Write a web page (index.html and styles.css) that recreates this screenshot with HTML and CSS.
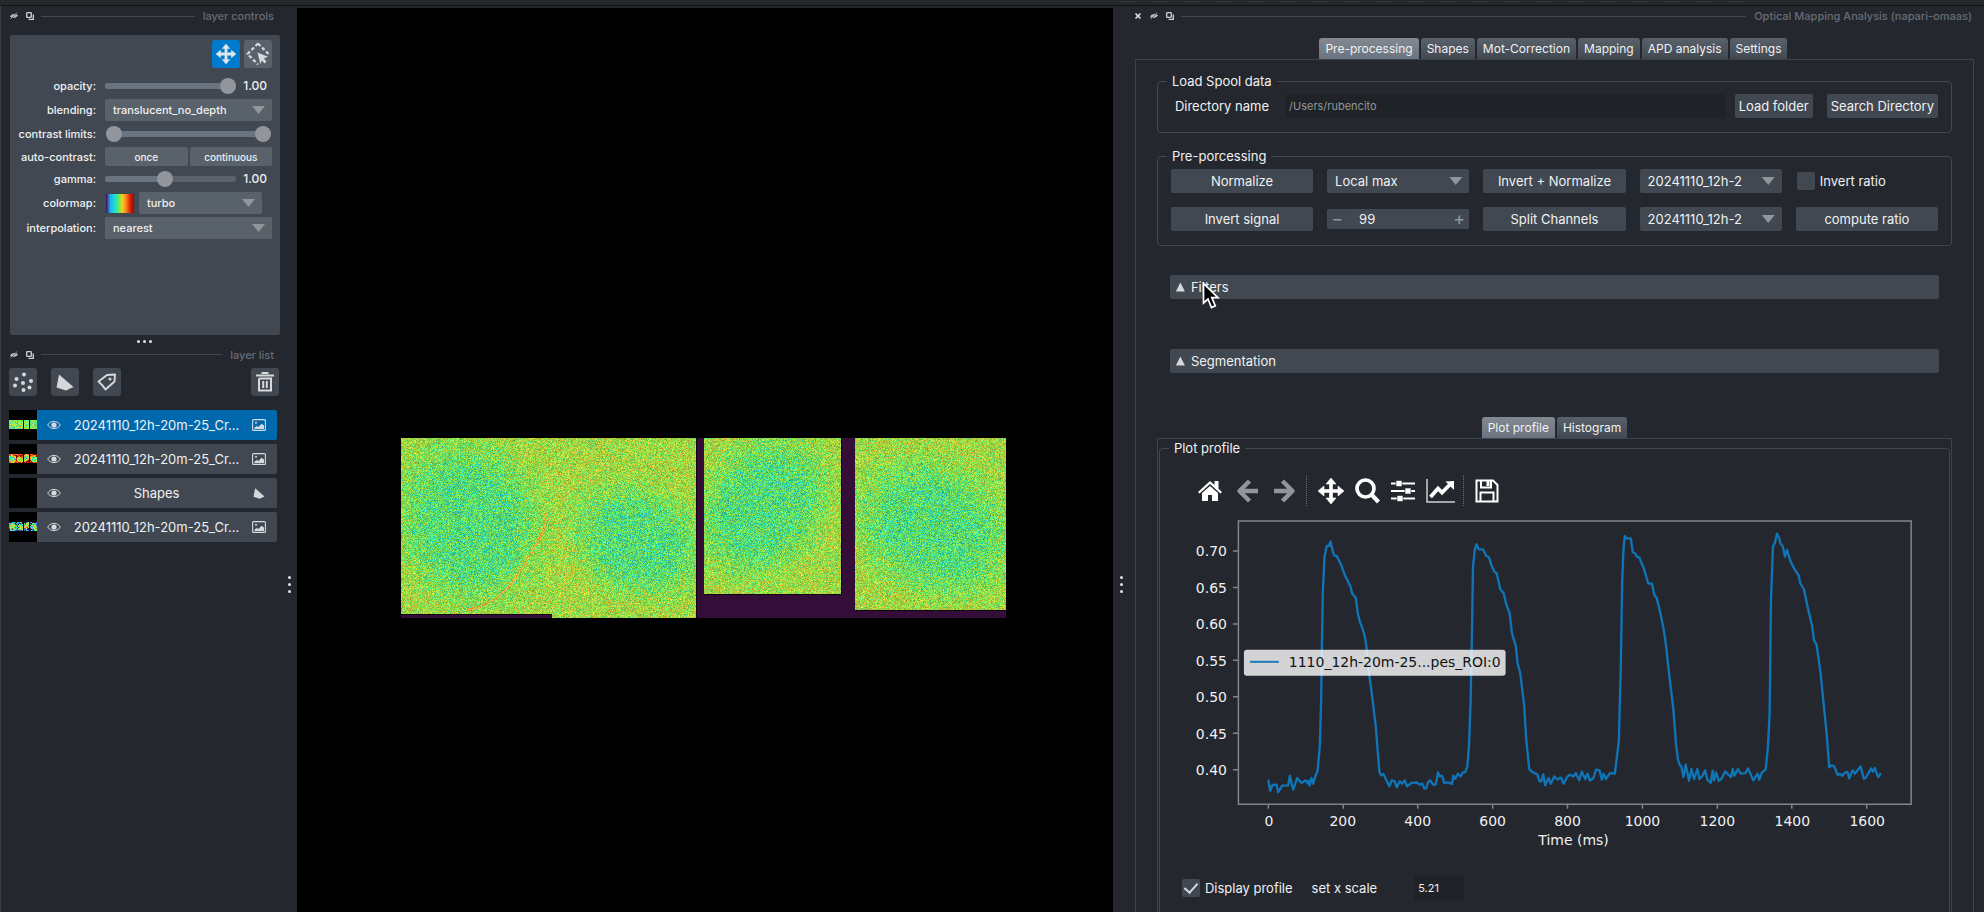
FILE: index.html
```
<!DOCTYPE html>
<html lang="en">
<head>
<meta charset="utf-8">
<title>napari</title>
<link rel="stylesheet" href="styles.css">
</head>
<body>
<svg class="defs" aria-hidden="true">
  <symbol id="i-hide" viewBox="0 0 10 10"><path d="M1 5.5C3 2.5 7 2.500 9 4.500C7 7.500 3 7.500 1 5.500Z" fill="#b9bcc1"/><path d="M1.500 8.500L8.500 1.500" stroke="#24272e" stroke-width="1"/><path d="M1.500 7.800L7.800 1.800" stroke="#d0d2d5" stroke-width=".8"/></symbol>
  <symbol id="i-float" viewBox="0 0 10 10"><rect x="1.700" y="1.700" width="4.600" height="4.600" rx=".6" fill="none" stroke="#d0d2d5" stroke-width="1.300"/><path d="M8.300 3.500V8.300H3.500" fill="none" stroke="#d0d2d5" stroke-width="1.300"/></symbol>
  <symbol id="i-close" viewBox="0 0 10 10"><path d="M2.500 2.500L7.500 7.500M7.500 2.500L2.500 7.500" stroke="#e6e7e9" stroke-width="1.500"/></symbol>
  <symbol id="i-move" viewBox="0 0 26 26"><path d="M13 4V22M4 13H22" stroke="currentColor" stroke-width="3.600"/><path d="M13 0L18 6H8ZM13 26L8 20H18ZM0 13L6 8V18ZM26 13L20 18V8Z" fill="currentColor" stroke="currentColor" stroke-width=".6" stroke-linejoin="round"/></symbol>
  <symbol id="i-eye" viewBox="0 0 14 10"><path d="M.7 5C3.500 .2 10.500 .2 13.300 5C10.500 9.800 3.500 9.800 .7 5Z" fill="none" stroke="#d8d9dc" stroke-width="1"/><circle cx="7" cy="5" r="2.600" fill="#d8d9dc"/></symbol>
  <symbol id="i-image" viewBox="0 0 14 12"><rect x=".6" y=".6" width="12.800" height="10.800" rx="1" fill="none" stroke="#d8d9dc" stroke-width="1.100"/><circle cx="4" cy="3.800" r="1" fill="#d8d9dc"/><path d="M2.500 10V8.500L5 7L6.500 8L9.500 4.800L12 6.500V10Z" fill="#d8d9dc"/></symbol>
  <symbol id="i-shape" viewBox="0 0 18 17"><path d="M3 .5L17.500 13L10 16.500L.5 13.500Z" fill="#d4d6d9"/></symbol>
</svg>
<header class="strip"><span></span></header>
<div class="app">
  <aside class="left">
    <div class="docks">
      <div class="dock-title">
        <svg class="i10"><use href="#i-hide"/></svg><svg class="i10"><use href="#i-float"/></svg><hr><span>layer controls</span>
      </div>
      <section class="controls">
        <div class="modes">
          <button class="sq active" aria-label="Pan and zoom"><svg width="20" height="20"><use href="#i-move"/></svg></button>
          <button class="sq light" aria-label="Transform"><svg width="24" height="24" viewBox="0 0 24 24"><path d="M12 1.500L22.500 12M12 1.500L1.500 12L12 22.500" fill="none" stroke="#d8d9dc" stroke-width="2.200" stroke-dasharray="3.500 2.200"/><path d="M11.500 10.500L22 14.800L17.800 16.500L20.500 19.500L18.500 21.500L16 18.500L14.300 22Z" fill="#d8d9dc"/></svg></button>
        </div>
        <div class="form">
          <label for="opacity">opacity:</label>
          <div class="slide"><input id="opacity" type="range" min="0" max="1" step="0.01" value="1" style="--fill:100%"><output>1.00</output></div>
          <label for="blending">blending:</label>
          <div class="pick"><select id="blending"><option>translucent_no_depth</option></select></div>
          <label for="clim">contrast limits:</label>
          <div class="double"><input id="clim" type="range" value="0"><input type="range" value="100" aria-label="upper contrast limit"></div>
          <span class="lab">auto-contrast:</span>
          <div class="pair"><button>once</button><button>continuous</button></div>
          <label for="gamma">gamma:</label>
          <div class="slide"><input id="gamma" type="range" min="0" max="100" value="45" style="--fill:45%"><output>1.00</output></div>
          <label for="cmap">colormap:</label>
          <div class="cmap"><i class="turbo"></i><div class="pick"><select id="cmap"><option>turbo</option></select></div></div>
          <label for="interp">interpolation:</label>
          <div class="pick"><select id="interp"><option>nearest</option></select></div>
        </div>
      </section>
      <div class="hdots"><i></i><i></i><i></i></div>
      <div class="dock-title">
        <svg class="i10"><use href="#i-hide"/></svg><svg class="i10"><use href="#i-float"/></svg><hr><span>layer list</span>
      </div>
      <div class="layer-tools">
        <button class="sq" aria-label="New points layer"><svg width="20" height="20" viewBox="0 0 20 20" fill="#d8d9dc"><circle cx="11" cy="2.500" r="2"/><circle cx="3.500" cy="7" r="2"/><circle cx="18" cy="9" r="2"/><circle cx="10" cy="11" r="2"/><circle cx="2" cy="13.500" r="2"/><circle cx="16.500" cy="15.500" r="2"/><circle cx="10.500" cy="18" r="2"/></svg></button>
        <button class="sq" aria-label="New shapes layer"><svg width="18" height="17"><use href="#i-shape"/></svg></button>
        <button class="sq" aria-label="New labels layer"><svg width="20" height="18" viewBox="0 0 20 18"><path d="M1.500 8.500L10 2L18 1.500L17.500 8.500L8.500 16.500Q5.500 12 1.500 8.500Z" fill="none" stroke="#d8d9dc" stroke-width="1.900" stroke-linejoin="round"/><circle cx="13" cy="6" r="1.500" fill="#d8d9dc"/></svg></button>
        <button class="sq trash" aria-label="Delete layer"><svg width="18" height="20" viewBox="0 0 18 20" fill="none" stroke="#d8d9dc" stroke-width="2"><path d="M0 3.500H18M5.500 1H12.500M3 6.500V18.500H15V6.500H3M7.200 9V16M10.800 9V16"/></svg></button>
      </div>
      <ul class="layers">
        <li class="sel"><canvas width="28" height="30" data-kind="0"></canvas><svg width="14" height="10"><use href="#i-eye"/></svg><span>20241110_12h-20m-25_Cr...</span><svg width="14" height="12"><use href="#i-image"/></svg></li>
        <li><canvas width="28" height="30" data-kind="1"></canvas><svg width="14" height="10"><use href="#i-eye"/></svg><span>20241110_12h-20m-25_Cr...</span><svg width="14" height="12"><use href="#i-image"/></svg></li>
        <li><canvas width="28" height="30" data-kind="3"></canvas><svg width="14" height="10"><use href="#i-eye"/></svg><span>Shapes</span><svg width="14" height="11"><use href="#i-shape"/></svg></li>
        <li><canvas width="28" height="30" data-kind="2"></canvas><svg width="14" height="10"><use href="#i-eye"/></svg><span>20241110_12h-20m-25_Cr...</span><svg width="14" height="12"><use href="#i-image"/></svg></li>
      </ul>
    </div>
    <div class="vdots"><i></i><i></i><i></i></div>
  </aside>
  <main class="viewer"><canvas id="view" width="605" height="180"></canvas></main>
  <div class="vdots split"><i></i><i></i><i></i></div>
  <aside class="right">
    <div class="dock-title">
      <svg class="i10"><use href="#i-close"/></svg><svg class="i10"><use href="#i-hide"/></svg><svg class="i10"><use href="#i-float"/></svg><hr><span>Optical Mapping Analysis (napari-omaas)</span>
    </div>
    <nav class="tabs top"><button class="on">Pre-processing</button><button>Shapes</button><button>Mot-Correction</button><button>Mapping</button><button>APD analysis</button><button>Settings</button></nav>
    <div class="pane">
      <fieldset class="load">
        <legend>Load Spool data</legend>
        <div class="row"><label for="dir">Directory name</label><input id="dir" type="text" value="/Users/rubencito"><button>Load folder</button><button class="search">Search Directory</button></div>
      </fieldset>
      <fieldset class="prep">
        <legend>Pre-porcessing</legend>
        <div class="grid">
          <button>Normalize</button>
          <div class="pick"><select aria-label="Normalization"><option>Local max</option></select></div>
          <button>Invert + Normalize</button>
          <div class="pick"><select aria-label="Image 1"><option>20241110_12h-20m-25_Cr</option></select></div>
          <label class="check"><input type="checkbox">Invert ratio</label>
          <button>Invert signal</button>
          <div class="spin"><button aria-label="Decrease">−</button><input type="text" value="99" aria-label="Percentile"><button aria-label="Increase">+</button></div>
          <button>Split Channels</button>
          <div class="pick"><select aria-label="Image 2"><option>20241110_12h-20m-25_Cr</option></select></div>
          <button>compute ratio</button>
        </div>
      </fieldset>
      <button class="fold filters"><i></i>Filters<svg class="cursor" width="18" height="27" viewBox="0 0 18 27"><path d="M1.500 1.500V21L6 17L9.500 25.500L13.300 23.800L9.800 15.700H16Z" fill="#000" stroke="#fff" stroke-width="1.700"/></svg></button>
      <button class="fold"><i></i>Segmentation</button>
      <nav class="tabs"><button class="on">Plot profile</button><button>Histogram</button></nav>
      <div class="subpane">
        <fieldset class="plot">
          <legend>Plot profile</legend>
          <div class="toolbar">
            <button aria-label="Home"><svg width="24" height="22" viewBox="0 0 24 22" fill="#fff"><path d="M12 1L0 12L1.600 13.500L12 4L22.400 13.500L24 12L20.500 8.800V1H16.500V5Z"/><path d="M12 6L4 13V21H10V15H14V21H20V13Z"/></svg></button>
            <button aria-label="Back"><svg width="23" height="24" viewBox="0 0 23 24" fill="none" stroke="#92959a" stroke-width="4.500"><path d="M13.500 2L3.500 12L13.500 22M4 12H22" stroke-linejoin="round"/></svg></button>
            <button aria-label="Forward"><svg width="23" height="24" viewBox="0 0 23 24" fill="none" stroke="#92959a" stroke-width="4.500"><path d="M9.500 2L19.500 12L9.500 22M19 12H1" stroke-linejoin="round"/></svg></button>
            <i class="sep"></i>
            <button aria-label="Pan"><svg width="26" height="26"><use href="#i-move"/></svg></button>
            <button aria-label="Zoom"><svg width="25" height="26" viewBox="0 0 25 26" fill="none" stroke="#fff"><circle cx="10.500" cy="10.500" r="8.500" stroke-width="3.700"/><path d="M16.500 16.500L23.500 24" stroke-width="4.200"/></svg></button>
            <button aria-label="Subplots"><svg width="24" height="22" viewBox="0 0 24 22" fill="#fff"><path d="M0 2.500H24V4.500H0ZM0 10H24V12H0ZM0 17.500H24V19.500H0Z"/><path d="M5 .5H11V6.500H5ZM14 8H20V14H14ZM6 15.500H12V21.500H6Z" stroke="#24272e" stroke-width=".6"/></svg></button>
            <button aria-label="Edit axes"><svg width="29" height="24" viewBox="0 0 29 24"><path d="M1 0V23H29" fill="none" stroke="#cfd1d4" stroke-width="1.500"/><path d="M4.500 18L12 9.500L16 13.500L24 5.500" fill="none" stroke="#fff" stroke-width="3.800"/><path d="M28 2V11L19.500 2.500Z" fill="#fff"/></svg></button>
            <i class="sep"></i>
            <button aria-label="Save"><svg width="24" height="24" viewBox="0 0 24 24" fill="none" stroke="#fff" stroke-width="2"><path d="M1.500 1.500H18L22.500 6V22.500H1.500ZM5.500 22V13.500H18.500V22"/><path d="M6 2V8.500H16V2"/><path d="M11.500 2H14.500V7H11.500Z" fill="#fff" stroke="none"/></svg></button>
          </div>
          <svg class="chart" viewBox="1160 516 790 346">
            <g class="axes"><path d="M1238.500 521H1912V804.500H1238.500Z"/>
            <path d="M1233 551H1238M1233 587.500H1238M1233 624H1238M1233 660.500H1238M1233 697H1238M1233 733.500H1238M1233 770H1238M1268.500 805V809M1343.500 805V809M1418 805V809M1493 805V809M1568 805V809M1643 805V809M1718 805V809M1792.500 805V809M1867.500 805V809"/></g>
            <g class="line">
            <polyline transform="translate(1120 500) scale(.33333)" points="445,840 451,873 458,856 470,855 475,877 487,858 505,857 510,828 520,870 532,835 545,850 558,842 563,850 567,843 569,858 575,835 580,852 588,825 593,815 600,740 604,600 606,450 609,280 614,170 621,138 627,138 632,125 640,158 645,168 651,168 664,195 675,225 692,260 697,280 708,294 714,340 721,368 728,385 735,410 740,440 745,500 756,580 768,680 779,817 785,827 791,823 800,842 809,860 816,842 825,845 831,863 840,845 847,852 855,842 862,860 875,850 890,848 900,855 908,852 914,867 920,865 925,847 932,842 940,855 948,855 955,818 960,830 967,828 974,850 985,848 997,853 1001,828 1006,838 1015,822 1023,830 1030,818 1037,817 1043,800 1048,740 1053,600 1057,400 1060,200 1066,145 1071,133 1077,148 1090,148 1100,168 1108,172 1115,195 1124,215 1131,220 1142,268 1152,280 1160,313 1170,340 1177,400 1189,440 1194,490 1202,520 1214,620 1220,720 1229,808 1240,818 1253,824 1260,845 1265,845 1271,824 1277,857 1287,835 1294,852 1304,830 1314,840 1324,832"/>
            <polyline transform="translate(1544 500) scale(.33333)" points="52,832 60,852 70,833 78,825 90,830 97,820 107,842 115,816 125,838 132,822 139,843 150,835 157,810 168,812 175,840 180,822 187,838 200,820 214,822 226,725 232,500 236,250 240,150 244,108 250,115 262,115 268,157 275,160 280,170 287,172 301,205 314,250 326,252 332,283 340,295 352,345 362,395 368,440 378,530 390,630 398,735 404,782 410,798 414,800 420,832 427,795 437,843 444,808 452,838 462,808 468,838 476,830 485,812 492,840 502,850 508,813 512,842 518,818 526,843 534,838 546,815 555,825 563,832 568,808 573,828 584,808 592,822 607,820 614,806 630,842 643,822 648,840 656,818 667,810 674,740 679,640 683,300 689,140 695,128 701,101 708,115 712,132 718,138 725,170 731,150 742,185 755,210 766,226 771,250 782,268 795,330 807,380 812,420 820,435 832,520 840,600 850,700 858,803 865,797 873,800 883,825 890,823 897,828 906,818 913,817 918,836 928,812 935,822 952,800 962,837 967,835 984,806 989,816 995,805 1005,832 1013,820"/>
            </g>
            <g class="ylab"><text x="1227" y="556">0.70</text><text x="1227" y="593">0.65</text><text x="1227" y="629">0.60</text><text x="1227" y="666">0.55</text><text x="1227" y="702">0.50</text><text x="1227" y="739">0.45</text><text x="1227" y="775">0.40</text></g>
            <g class="xlab"><text x="1269" y="826">0</text><text x="1343" y="826">200</text><text x="1418" y="826">400</text><text x="1493" y="826">600</text><text x="1568" y="826">800</text><text x="1643" y="826">1000</text><text x="1718" y="826">1200</text><text x="1793" y="826">1400</text><text x="1868" y="826">1600</text><text x="1574" y="845">Time (ms)</text></g>
            <rect x="1244" y="650" width="262" height="26" rx="3" fill="#fff" fill-opacity=".8"/>
            <path d="M1250 662H1279" stroke="#1c7bb4" stroke-width="2"/>
            <text class="key" x="1289" y="667">1110_12h-20m-25...pes_ROI:0</text>
          </svg>
          <div class="foot"><label class="check"><input type="checkbox" checked>Display profile</label><label for="xs">set x scale</label><input id="xs" type="text" value="5.21"></div>
        </fieldset>
      </div>
    </div>
  </aside>
</div>
<script src="app.js"></script>
</body>
</html>
```
FILE: styles.css
```
* { box-sizing: border-box; }
body { margin: 0; height: 100vh; overflow: hidden; display: flex; flex-direction: column; background: #24272e; color: #f0f1f2; font: 13px/16px Inter, "Liberation Sans", sans-serif; }
button, input, select { font: inherit; color: inherit; border: 0; border-radius: 2px; margin: 0; padding: 0; outline: 0; background: #414851; }
input[type="text"] { background: #1f2226; min-width: 0; }
svg { display: block; flex: none; }
hr { flex: 1; border: 0; height: 1px; margin: 0; background: #414851; }
.defs { position: absolute; width: 0; height: 0; }
.strip { flex: none; height: 6px; background: #26292c; border-bottom: 1px solid #101217; padding-left: 1120px; }
.strip span { display: block; width: 624px; height: 3px; background: repeating-linear-gradient(90deg, #33363b 0 16px, transparent 16px 32px) 0 1px / 100% 1px no-repeat; }
.app { flex: 1; min-height: 0; display: flex; }

.left { flex: none; width: 297px; display: flex; border-left: 1px solid #3c4046; }
.docks { flex: 1; padding: 0 1px 0 8px; }
.dock-title { display: flex; align-items: center; gap: 6px; height: 20px; color: #666d76; font-size: 11px; font-weight: 500; }
.dock-title hr { margin: 0 2px 0 0; }
.i10 { width: 10px; height: 10px; }
.docks .dock-title { padding-right: 6px; }
.controls { height: 300px; margin: 9px 0 0 1px; background: #414851; border-radius: 2px; padding: 5px 8px; }
.modes { display: flex; justify-content: flex-end; gap: 4px; margin-bottom: 8px; }
.sq { width: 28px; height: 28px; display: grid; place-items: center; color: #e0e6ec; border-radius: 3px; }
.sq.active { background: #007acc; }
.sq.light { background: #59616a; }
.form { display: grid; grid-template-columns: 78px 1fr; column-gap: 9px; grid-template-rows: 20px 22px 20px 19px 20px 22px 22px; row-gap: 3px; align-items: center; font-size: 11px; font-weight: 500; }
.form > label, .lab { justify-self: end; white-space: nowrap; }
.form .pick select, .pair button { background: #59616a; }
.form .pick select { height: 22px; }
.slide { display: grid; grid-template-columns: 1fr 36px; column-gap: 0; align-items: center; }
.slide output { text-align: right; padding-right: 5px; font-size: 12px; }
input[type="range"] { appearance: none; width: 100%; height: 16px; background: transparent; }
input[type="range"]::-webkit-slider-runnable-track { height: 6px; border-radius: 2px; background: linear-gradient(90deg, #6a7380 var(--fill, 100%), #59616a var(--fill, 100%)); }
input[type="range"]::-webkit-slider-thumb { appearance: none; width: 16px; height: 16px; margin-top: -5px; border-radius: 50%; background: #92959b; }
.double { display: grid; padding: 0 1px; }
.double input { grid-area: 1 / 1; }
.double input + input::-webkit-slider-runnable-track { background: none; }
.pair { display: grid; grid-template-columns: 1fr 1fr; gap: 2px; }
.pair button { height: 19px; font-size: 10px; }
.cmap { display: grid; grid-template-columns: 29px 1fr; gap: 5px; padding-right: 10px; align-items: center; }
.turbo { height: 19px; margin-left: 1px; background: linear-gradient(90deg, #30123b, #4454c4 8%, #18b8e0 16%, #20d8e0 30%, #50f060 44%, #f0d020 58%, #ff9020 70%, #e02000 86%, #900c00); }
.pick { display: grid; align-items: center; min-width: 0; }
.pick select { grid-area: 1 / 1; appearance: none; width: 100%; min-width: 0; height: 24px; padding: 0 36px 0 8px; }
.grid .pick select { padding-right: 40px; }
.pick::after { content: ""; grid-area: 1 / 1; justify-self: end; margin-right: 7px; width: 13px; height: 8px; background: #92959a; clip-path: polygon(0 0, 100% 0, 50% 100%); pointer-events: none; }
.hdots { height: 12px; display: flex; justify-content: center; align-items: center; gap: 3px; }
.hdots i, .vdots i { width: 3px; height: 3px; border-radius: 50%; background: #e2e3e5; }
.vdots { width: 16px; display: flex; flex-direction: column; align-items: center; gap: 4px; padding-top: 570px; }
.hdots + .dock-title { height: 15px; }
.layer-tools { display: flex; gap: 14px; margin: 6px 0 14px; padding-right: 1px; }
.trash { margin-left: auto; }
.layers { list-style: none; margin: 0; padding: 0 3px 0 0; display: grid; gap: 4px; }
.layers li { height: 30px; display: flex; align-items: center; gap: 10px; background: #414851; border-radius: 2px; padding-right: 11px; }
.layers li.sel { background: #0069ad; }
.layers span { flex: 1; text-align: center; white-space: nowrap; }

.viewer { flex: 1; margin-top: 2px; background: #000; padding: 430px 0 0 104px; min-width: 0; overflow: hidden; }
.viewer canvas { display: block; }
.split { flex: none; width: 18px; }

.right { flex: none; width: 43%; padding: 0 10px 0 2px; display: flex; flex-direction: column; min-height: 0; }
.right .dock-title { padding-right: 2px; }
.tabs { display: flex; justify-content: center; gap: 2px; }
.tabs.top { margin-top: 12px; }
.tabs button { height: 21px; padding: 0 6px; border-radius: 3px 3px 0 0; font-size: 12px; background: linear-gradient(#59616a, #414851); }
.tabs .on { background: linear-gradient(#838990, #6a7380); }
.pane { flex: 1; min-height: 0; overflow: hidden; border: 1px solid #3d434b; border-bottom: 0; padding: 11px 21px 0; margin-left: 2px; }
fieldset { margin: 0; min-width: 0; border: 1px solid #414851; border-radius: 4px; padding: 0 13px; }
legend { height: 20px; line-height: 20px; padding: 0 5px; margin-left: -4px; }
.load { height: 62px; }
.row { display: flex; align-items: center; padding-top: 3px; }
.row button { height: 24px; padding: 0 4px; white-space: nowrap; }
.row label { padding: 0 16px 0 4px; white-space: nowrap; }
.row input { flex: 1; height: 24px; padding: 0 4px; margin-right: 10px; font-size: 11px; color: #92959a; }
.search { margin-left: 14px; }
.prep { height: 100px; margin-top: 13px; }
.grid { display: grid; grid-template-columns: repeat(5, minmax(0, 1fr)); gap: 14px; padding-top: 3px; align-items: center; }
.grid > button { height: 24px; }
.check { display: flex; align-items: center; gap: 5px; white-space: nowrap; }
.check input { appearance: none; width: 18px; height: 18px; display: grid; place-items: center; }
.grid .check { padding-left: 1px; }
.check input:checked::after { content: ""; width: 6px; height: 11px; margin-top: -3px; border: solid #d8d9dc; border-width: 0 2px 2px 0; rotate: 42deg; }
.spin { display: flex; height: 20px; background: #414851; border-radius: 2px; }
.spin button { width: 20px; color: #92959a; font-size: 18px; }
.spin input[type="text"] { flex: 1; background: none; padding-left: 12px; }
.fold { display: flex; align-items: center; gap: 6px; width: calc(100% - 26px); height: 24px; margin: 0 13px; padding: 0 6px; position: relative; }
.fold i { width: 9px; height: 9px; background: #d8d9dc; clip-path: polygon(50% 0, 100% 100%, 0 100%); }
.filters { margin-top: 29px; margin-bottom: 50px; }
.cursor { position: absolute; left: 32px; top: 7px; }
.pane .tabs { margin-top: 44px; }
.subpane { border: 1px solid #3d434b; padding: 0 1px; height: 100vh; }
.plot { height: 100%; padding: 0; }
.plot legend { height: 18px; line-height: 18px; margin-left: 9px; }
.toolbar { display: flex; align-items: center; padding: 18px 0 0 38px; }
.toolbar button { background: none; color: #fff; margin-right: 14px; }
.toolbar button:nth-of-type(3) { margin-right: 10px; }
.toolbar button:nth-of-type(4), .toolbar button:nth-of-type(5), .toolbar button:nth-of-type(6) { margin-right: 11px; }
.toolbar button:nth-of-type(7) { margin-right: 8px; }
.sep { height: 31px; border-left: 1px dotted #6a7078; margin-right: 11px; }
.chart { width: 100%; height: auto; margin-top: 10px; font: 14px "DejaVu Sans", sans-serif; }
.axes path { fill: none; stroke: #81868b; stroke-width: 1.5; }
.line polyline { fill: none; stroke: #1075b6; stroke-width: 7; stroke-linejoin: round; }
.chart text { fill: #f0f1f2; }
.ylab { text-anchor: end; }
.xlab { text-anchor: middle; }
.chart .key { fill: #101214; }
.foot { display: flex; align-items: center; padding: 14px 0 0 22px; }
.foot > label + label { margin: 0 37px 0 19px; }
.foot input[type="text"] { width: 50px; height: 24px; padding: 0 4px; font-size: 11px; }
```
FILE: app.js
```
// Seeded generator keeps the noise stable between loads.
let seed = 12345;
function rnd() {
  seed = (seed * 1664525 + 1013904223) >>> 0;
  return seed / 4294967296;
}
const gauss = () => rnd() + rnd() + rnd() - 1.5;

const stops = [[48, 18, 59], [70, 98, 215], [54, 170, 249], [26, 228, 182], [114, 250, 90], [200, 235, 50], [250, 186, 57], [246, 107, 25], [203, 42, 4], [122, 4, 3]];
function turbo(v) {
  const t = Math.min(0.999, Math.max(0, v)) * (stops.length - 1);
  const i = Math.floor(t), f = t - i;
  return stops[i].map((c, k) => c + (stops[i + 1][k] - c) * f);
}

// Tissue outlines: centre, radii and rotation in radians.
const hearts = [
  [68, 84, 88, 76, 1.2], [236, 103, 72, 56, 0.4],
  [362, 68, 80, 62, -0.9], [533, 90, 86, 68, 0.5]
];
function depth(x, y) {
  let best = 0;
  for (const [cx, cy, a, b, r] of hearts) {
    const dx = x - cx, dy = y - cy;
    const u = (dx * Math.cos(r) + dy * Math.sin(r)) / a;
    const w = (dy * Math.cos(r) - dx * Math.sin(r)) / b;
    best = Math.max(best, Math.min(1, Math.max(0, (1.15 - Math.hypot(u, w)) * 1.7)));
  }
  return best;
}

// The bright tissue edge on the lower right of the first frame.
const ridge = [[144, 75], [142, 92], [136, 104], [123, 126], [110, 145], [97, 159], [82, 167], [66, 172]];
function nearRidge(x, y) {
  if (x < 60 || x > 150 || y < 70) return false;
  for (let i = 1; i < ridge.length; i++) {
    const [x1, y1] = ridge[i - 1], [x2, y2] = ridge[i];
    const dx = x2 - x1, dy = y2 - y1;
    const t = Math.min(1, Math.max(0, ((x - x1) * dx + (y - y1) * dy) / (dx * dx + dy * dy)));
    if (Math.hypot(x - x1 - t * dx, y - y1 - t * dy) < 1.4) return true;
  }
  return false;
}

const view = document.getElementById('view');
const ctx = view.getContext('2d');
const img = ctx.createImageData(605, 180);
function frameAt(x, y) {
  if (x < 295) return y < (x < 151 ? 176 : 180);
  if (x >= 303 && x < 440) return y < 156;
  return x >= 454 && y < 172;
}
for (let y = 0; y < 180; y++) {
  for (let x = 0; x < 605; x++) {
    const p = (y * 605 + x) * 4;
    let c;
    if (frameAt(x, y)) {
      let v = 0.525 - 0.115 * depth(x, y) + gauss() * 0.13;
      if (nearRidge(x, y)) v += 0.14;
      const s = 0.87 + gauss() * 0.18;
      c = turbo(v).map(k => k * s + 10);
    } else {
      c = frameAt(x, y - 1) || frameAt(x - 1, y) ? [16, 6, 18] : [52, 14, 56];
    }
    img.data[p] = c[0];
    img.data[p + 1] = c[1];
    img.data[p + 2] = c[2];
    img.data[p + 3] = 255;
  }
}
ctx.putImageData(img, 0, 0);

for (const thumb of document.querySelectorAll('canvas[data-kind]')) {
  const t = thumb.getContext('2d');
  const kind = Number(thumb.dataset.kind);
  t.fillStyle = '#000';
  t.fillRect(0, 0, 28, 30);
  if (kind === 3) continue;
  for (let y = 0; y < 9; y++) {
    for (let x = 0; x < 28; x++) {
      if (x === 14 || x === 20) continue;
      const d = depth(x * 21.6, y * 20);
      const v = [0.45 + gauss() * 0.22, 0.9 - 0.5 * d + gauss() * 0.2, 0.15 + 0.35 * d + gauss() * 0.4][kind];
      t.fillStyle = `rgb(${turbo(v).map(Math.round).join(',')})`;
      t.fillRect(x, y + 10, 1, 1);
    }
  }
}
```
